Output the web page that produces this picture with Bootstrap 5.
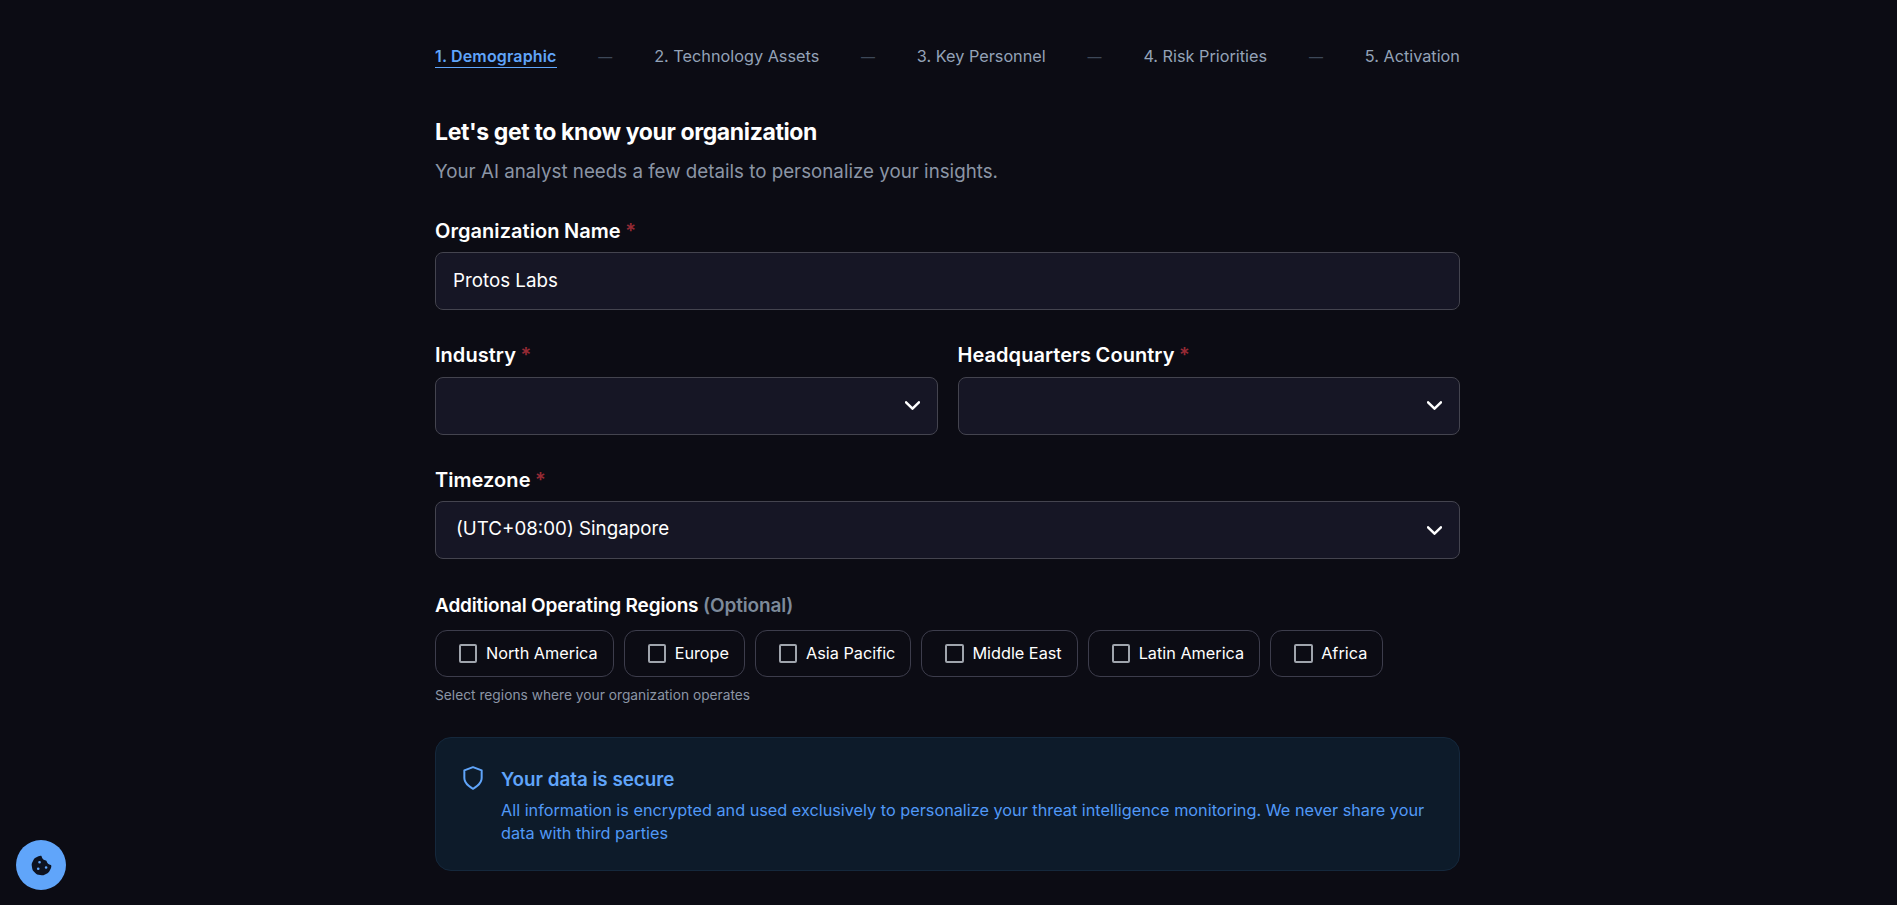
<!DOCTYPE html>
<html lang="en">
<head>
<meta charset="utf-8">
<title>Onboarding</title>
<link href="https://cdn.jsdelivr.net/npm/bootstrap@5.3.0/dist/css/bootstrap.min.css" rel="stylesheet">
<style>
body{background:#0c0c14;color:#fff;font-family:Inter,"Liberation Sans",sans-serif;min-height:905px;overflow:hidden}
.shell{width:1025px;margin-left:435px;padding-top:46px}
.stepper{font-size:16.25px;line-height:21px;color:#94a3b8;margin-bottom:49px;list-style:none;padding-left:0}
.stepper .on{color:#60a5fa;font-weight:600;border-bottom:1px solid #60a5fa;font-size:16px;letter-spacing:.15px}
.stepper .dash{color:#3d4858;font-size:14px}
.ttl{font-size:23px;line-height:30px;font-weight:700;letter-spacing:-.37px;margin-bottom:12px;color:#fff}
.sub{font-size:18.76px;line-height:26px;color:#8b95a5;margin-bottom:34px}
.lbl{display:block;font-size:20px;line-height:24px;font-weight:600;letter-spacing:.05px;word-spacing:-.6px;margin-bottom:9.2px;color:#fff}
.lbl .req{color:#962a34}
.fld{margin-bottom:33.3px}
.form-control.inp,.form-select.inp{height:58px;background-color:#161625;border:1px solid #44444f;border-radius:8px;color:#fff;font-size:18.75px;padding:0 17px 2px}
.form-select.inp{padding-left:20px;background-image:url("data:image/svg+xml,%3csvg xmlns='http://www.w3.org/2000/svg' viewBox='0 0 14 8'%3e%3cpath fill='none' stroke='%23fff' stroke-width='2.3' stroke-linecap='round' stroke-linejoin='round' d='M1 1l6 6 6-6'/%3e%3c/svg%3e");background-size:15px 9px;background-position:right 17px center}
.duo{--bs-gutter-x:20px;margin-bottom:0}
.regions-lbl{font-size:19px;line-height:24px;font-weight:600;letter-spacing:-.15px;margin-top:34.5px;margin-bottom:12.3px}
.regions-lbl .opt{color:#7d8a9a}
.chips{gap:10px}
.chip{height:47px;border:1px solid #3d3d4c;border-radius:12px;padding:0 15px 0 23px;gap:8.6px;font-size:16.25px;font-weight:400;color:#fff;margin:0}
.chip .form-check-input{width:18.4px;height:18.4px;margin:0;background-color:transparent;border:2px solid #a0a5ad;border-radius:2px;flex:none}
.hint{font-size:13.75px;line-height:20px;color:#8b95a5;margin-top:8px;margin-bottom:32px}
.note{height:134px;background:#0d1b2a;border:1px solid #15283c;border-radius:16px;padding:29px 24px 0 24px;gap:15px;color:#5199f7}
.note svg{flex:none;margin-top:-2px}
.note h3{font-size:18.8px;line-height:26px;font-weight:600;color:#60a5fa;margin:0 0 6px}
.note p{font-size:16.25px;line-height:23px;margin:0}
.fab{width:50px;height:50px;left:16px;bottom:15px;background:#60a5fa;border:0;padding:0}
</style>
</head>
<body>
<main class="shell">
  <ol class="stepper d-flex justify-content-between align-items-start">
    <li class="on">1. Demographic</li><li class="dash">—</li>
    <li>2. Technology Assets</li><li class="dash">—</li>
    <li>3. Key Personnel</li><li class="dash">—</li>
    <li>4. Risk Priorities</li><li class="dash">—</li>
    <li>5. Activation</li>
  </ol>
  <h1 class="ttl">Let's get to know your organization</h1>
  <p class="sub">Your AI analyst needs a few details to personalize your insights.</p>
  <form>
    <div class="fld">
      <label class="lbl" for="org">Organization Name <span class="req">*</span></label>
      <input id="org" class="form-control inp" value="Protos Labs">
    </div>
    <div class="row duo">
      <div class="col-6 fld">
        <label class="lbl" for="ind">Industry <span class="req">*</span></label>
        <select id="ind" class="form-select inp"><option></option></select>
      </div>
      <div class="col-6 fld">
        <label class="lbl" for="hq">Headquarters Country <span class="req">*</span></label>
        <select id="hq" class="form-select inp"><option></option></select>
      </div>
    </div>
    <div>
      <label class="lbl" for="tz">Timezone <span class="req">*</span></label>
      <select id="tz" class="form-select inp"><option>(UTC+08:00) Singapore</option></select>
    </div>
    <div class="regions-lbl">Additional Operating Regions <span class="opt">(Optional)</span></div>
    <div class="d-flex chips">
      <label class="chip d-flex align-items-center"><input class="form-check-input" type="checkbox">North America</label>
      <label class="chip d-flex align-items-center"><input class="form-check-input" type="checkbox">Europe</label>
      <label class="chip d-flex align-items-center"><input class="form-check-input" type="checkbox">Asia Pacific</label>
      <label class="chip d-flex align-items-center"><input class="form-check-input" type="checkbox">Middle East</label>
      <label class="chip d-flex align-items-center"><input class="form-check-input" type="checkbox">Latin America</label>
      <label class="chip d-flex align-items-center"><input class="form-check-input" type="checkbox">Africa</label>
    </div>
    <div class="hint">Select regions where your organization operates</div>
  </form>
  <section class="note d-flex">
    <svg width="26" height="26" viewBox="0 0 24 24" fill="none" stroke="#60a5fa" stroke-width="1.85" stroke-linecap="round" stroke-linejoin="round"><path d="M12 22s8-4 8-10V5l-8-3-8 3v7c0 6 8 10 8 10z"/></svg>
    <div>
      <h3>Your data is secure</h3>
      <p>All information is encrypted and used exclusively to personalize your threat intelligence monitoring. We never share your data with third parties</p>
    </div>
  </section>
</main>
<button class="fab position-fixed rounded-circle d-flex align-items-center justify-content-center" type="button" aria-label="Cookie settings">
  <svg width="21" height="21" viewBox="0 0 512 512" fill="#0d1220"><path d="M257.5 27.6c-.8-5.4-4.9-9.8-10.3-10.6c-22.1-3.1-44.6 .9-64.4 11.4l-74 39.5C89.1 78.4 73.2 94.9 63.4 115L26.7 190.6c-9.8 20.1-13 42.9-9.1 64.9l14.5 82.8c3.9 22.1 14.6 42.3 30.7 57.9l60.3 58.4c16.1 15.6 36.6 25.6 58.7 28.7l83 11.7c22.1 3.1 44.6-.9 64.4-11.4l74-39.5c19.7-10.5 35.6-27 45.4-47.2l36.7-75.5c9.8-20.1 13-42.9 9.1-64.9c-.9-5.3-5.3-9.3-10.6-10.1c-51.5-8.2-92.8-47.1-104.5-97.4c-1.8-7.6-8-13.4-15.7-14.6c-54.6-8.7-97.7-52-106.2-106.8zM208 144a32 32 0 1 1 0 64 32 32 0 1 1 0-64zM144 336a32 32 0 1 1 64 0 32 32 0 1 1 -64 0zm224-64a32 32 0 1 1 0 64 32 32 0 1 1 0-64z"/></svg>
</button>
<script src="https://cdn.jsdelivr.net/npm/bootstrap@5.3.0/dist/js/bootstrap.bundle.min.js"></script>
</body>
</html>
